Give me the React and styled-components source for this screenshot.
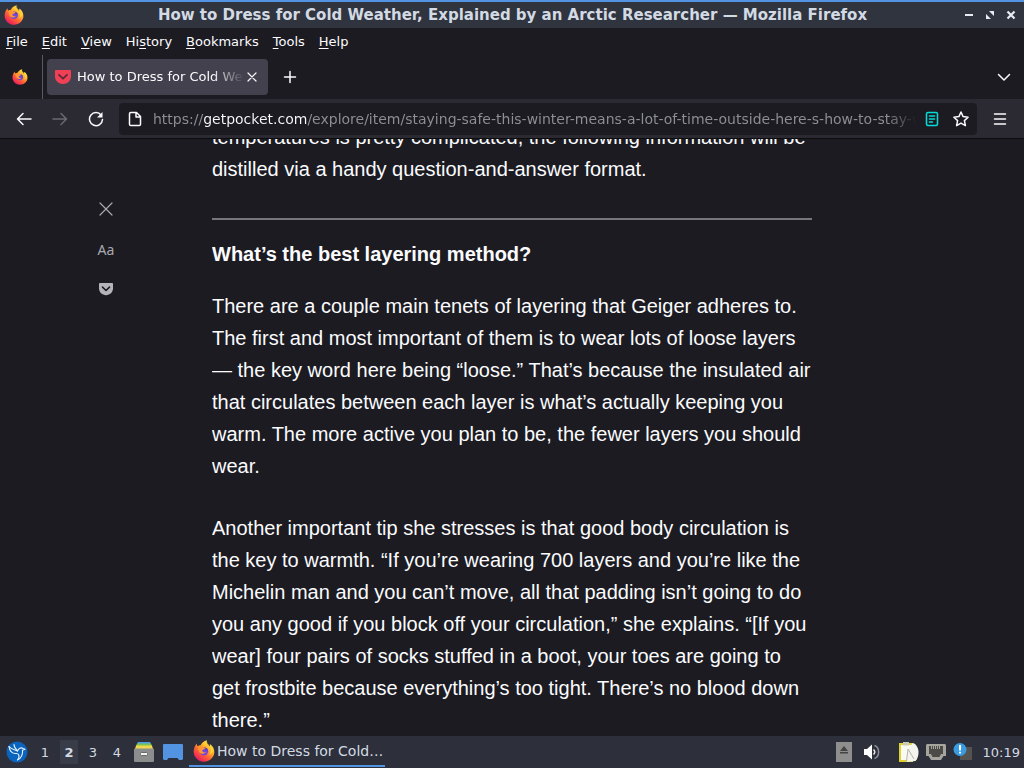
import styled, { createGlobalStyle } from "styled-components";

const GlobalStyle = createGlobalStyle`
*, *::before, *::after { box-sizing: border-box; }
body {
   margin: 0;
   background: #1c1b22;
   font-family: "DejaVu Sans", sans-serif;
}
button {
   padding: 0;
   border: 0;
   background: none;
   color: inherit;
   font: inherit;
   cursor: pointer;
}
p, h1, h2, ul { margin: 0; padding: 0; }
svg { display: block; flex: none; }
`

const Desktop = styled.div`
display: flex;
flex-direction: column;
height: 100vh;
overflow: hidden;
color: #fbfbfe;
`

/* window title */
const TitleBar = styled.header`
display: grid;
grid-template-columns: 1fr auto 1fr;
align-items: center;
flex: none;
height: 28px;
padding: 0 3px 0 4px;
border-top: 2px solid #5294e2;
background: #2f343f;
`

const WindowTitle = styled.h1`
font-size: 15px;
font-weight: bold;
line-height: 26px;
color: #d3dae3;
white-space: nowrap;
`

const WindowButtons = styled.div`
display: flex;
justify-content: flex-end;
color: #e8ecf2;
`

const WindowButton = styled.button`
display: flex;
align-items: center;
justify-content: center;
width: 21px;
height: 26px;
`

/* menu */
const MenuBar = styled.nav`
display: flex;
flex: none;
gap: 14px;
height: 27px;
padding: 0 6px;
background: #1c1b22;
`

const MenuItem = styled.button`
font-size: 13px;
line-height: 26px;
`

const Key = styled.span`
text-decoration: underline;
text-underline-offset: 2px;
`

/* tabs */
const TabBar = styled.div`
display: flex;
align-items: center;
flex: none;
height: 44px;
background: #1c1b22;
`

const PinnedTab = styled.button`
display: flex;
align-items: center;
justify-content: center;
width: 43px;
height: 44px;
padding-right: 2px;
border-right: 1px solid #5b5a62;
`

const Tab = styled.div`
display: flex;
align-items: center;
width: 221px;
height: 36px;
margin-left: 4px;
padding: 0 8px;
border-radius: 4px;
background: #42414d;
`

const TabTitle = styled.button`
flex: 1;
min-width: 0;
margin-left: 6px;
overflow: hidden;
font-size: 13px;
line-height: 36px;
text-align: left;
white-space: nowrap;
mask-image: linear-gradient(to left, transparent, #000 32px);
`

const TabClose = styled.button`
display: flex;
align-items: center;
justify-content: center;
width: 16px;
height: 20px;
`

const IconButton = styled.button`
display: flex;
align-items: center;
justify-content: center;
flex: none;
width: ${({ $w }) => $w || 36}px;
height: 32px;
margin-left: ${({ $push }) => $push ? "auto" : 0};
color: ${({ $dim }) => $dim ? "#6b6a74" : "#fbfbfe"};
`

/* navigation */
const NavBar = styled.div`
display: flex;
align-items: center;
flex: none;
height: 40px;
padding: 0 6px;
border-bottom: 1px solid #0c0c0d;
background: #2b2a33;
`

const UrlBar = styled.div`
display: flex;
align-items: center;
flex: 1;
min-width: 0;
height: 32px;
margin: 0 5px;
padding: 0 3px 0 0;
border-radius: 4px;
background: #1c1b22;
`

/* the domain is lit, the rest of the address is dimmed and fades out */
const UrlInput = styled.input`
flex: 1;
min-width: 0;
height: 32px;
margin-left: 2px;
padding: 0;
border: 0;
outline: none;
font: 14px "DejaVu Sans", sans-serif;
color: transparent;
background-image: linear-gradient(to right, #8f8f98 50px, #fbfbfe 50px, #fbfbfe 154px, #8f8f98 154px);
background-clip: text;
mask-image: linear-gradient(to left, transparent, #000 28px);
`

/* page */
const Page = styled.main`
display: grid;
grid-template-columns: 1fr minmax(0, 600px) 1fr;
flex: 1;
min-height: 0;
background: #1c1b22;
`

const ReaderTools = styled.aside`
display: flex;
flex-direction: column;
align-items: center;
padding-top: 50px;
`

const ReaderButton = styled.button`
display: flex;
align-items: center;
justify-content: center;
width: 40px;
height: 40px;
color: #a9a8ae;
font: 14px "Noto Sans", sans-serif;
`

const Article = styled.article`
display: flex;
flex-direction: column;
justify-content: flex-end;
min-height: 0;
overflow: hidden;
font: 20px/32px "Liberation Sans", Arial, sans-serif;
color: #fbfbfe;
`

const Paragraph = styled.p`
&+& {
   margin-top: 30px;
}
`

const Divider = styled.hr`
width: 100%;
margin: 33px 0 18px;
border: 0;
border-top: 2px solid #77767b;
`

const Heading = styled.h2`
margin-bottom: 20px;
font-size: 20px;
line-height: 32px;
`

/* panel */
const Panel = styled.footer`
display: flex;
align-items: center;
flex: none;
height: 32px;
padding: 0 4px 0 0;
background: #2d303b;
color: #d3dae3;
`

const PanelButton = styled.button`
display: flex;
align-items: center;
justify-content: center;
width: ${({ $w }) => $w}px;
height: 32px;
`

const Workspace = styled.button`
width: 24px;
height: 32px;
font-size: 13px;
font-weight: ${({ $on }) => $on ? "bold" : "normal"};
background: ${({ $on }) => $on ? "linear-gradient(#383c48, #383c48) center / 18px 24px no-repeat" : "none"};
`

const Task = styled.button`
display: flex;
align-items: center;
gap: 2px;
width: 196px;
height: 30px;
margin-left: 2px;
padding: 0 0 0 4px;
border-bottom: 2px solid #5294e2;
font-size: 14px;
white-space: nowrap;
`

const Tray = styled.div`
display: flex;
align-items: center;
margin-left: auto;
`

const TrayGroup = styled.div`
display: flex;
margin-left: 10px;
`

const Clock = styled.time`
margin-left: 7px;
font-size: 13px;
`

const FirefoxLogo = ({ size }) => (
    <svg width={size} height={size} viewBox="0 0 32 32" aria-hidden="true">
        <defs>
            <linearGradient id={`fx${size}`} x1=".85" y1=".05" x2=".2" y2=".95">
                <stop offset="0" stopColor="#fff04a" />
                <stop offset=".3" stopColor="#ffbd2e" />
                <stop offset=".6" stopColor="#ff6a33" />
                <stop offset=".85" stopColor="#f5334f" />
                <stop offset="1" stopColor="#dc1c6d" />
            </linearGradient>
        </defs>
        <path fill={`url(#fx${size})`} d="M20.500 0.500c-1 2-.5 4 1 5.500 1 1 2 2 2.500 3.500.7-1 .7-2.500.4-3.800C29 8.500 31 13 31 17.500 31 25 24.500 31.500 16 31.500S1 25 1 17c0-4 1.300-8.500 4.500-12 0 1.700.4 3 1.200 4 1.200-1 2.700-1.500 4.300-1.500C12.500 5 15.500 1.500 20.500.5z" />
        <circle cx="16" cy="16.500" r="6" fill="#7547d8" />
        <path fill="#4f3fc5" d="M16 11c4-.5 6 2.500 6 6-1-2-2.500-3-4.500-2.500z" />
        <path fill="#ff9632" d="M6.500 9.500c3-2 6-1.500 8 .5 1 .8 2.500 1 4 1-.2 2-2 2.500-4 3-1 .4-1.300 1.200-1 2 .8 2 3.500 2.500 5.500 1.500-1.500 3-7 3.500-9.500.5-1.500-2.500-2-6-3-8.500z" />
        <path fill="#ffd23c" d="M21 2c-1 4 5 7 5 13 0 3-1 5-3 7 3-1 6-4 6-8 0-3-2-6-4-7.500 0 1.500 0 2-.8 3C23.500 7 21 5.500 21 2z" />
    </svg>
)

const PocketIcon = ({ size, fill, mark }) => (
    <svg width={size} height={size} viewBox="0 0 16 16" aria-hidden="true">
        <path fill={fill} d="M.8 1h14.400c.5 0 .8.400.8.900V7.500c0 4.300-3.600 7.500-8 7.500S0 11.800 0 7.500V1.900c0-.5.300-.9.800-.9z" />
        <path fill="none" stroke={mark} strokeWidth="1.800" strokeLinecap="round" strokeLinejoin="round" d="M4 5.800 8 9.700l4-3.900" />
    </svg>
)

const Line = ({ size = 16, box = 16, width = 1.5, d, stroke = "currentColor", cap = "round" }) => (
    <svg width={size} height={size} viewBox={`0 0 ${box} ${box}`} fill="none" stroke={stroke} strokeWidth={width} strokeLinecap={cap} strokeLinejoin="round" aria-hidden="true">
        <path d={d} />
    </svg>
)

const MENU = [
    ["", "F", "ile"],
    ["", "E", "dit"],
    ["", "V", "iew"],
    ["Hi", "s", "tory"],
    ["", "B", "ookmarks"],
    ["", "T", "ools"],
    ["", "H", "elp"],
]

const PAGE_TITLE = "How to Dress for Cold Weather, Explained by an Arctic Researcher"
const PAGE_URL = "https://getpocket.com/explore/item/staying-safe-this-winter-means-a-lot-of-time-outside-here-s-how-to-stay-warm"

const WindowTop = () => (
    <TitleBar>
        <FirefoxLogo size={20} />
        <WindowTitle>{PAGE_TITLE} — Mozilla Firefox</WindowTitle>
        <WindowButtons>
            <WindowButton aria-label="Minimize">
                <Line size={10} box={10} width={2} cap="butt" d="M1 5h8" />
            </WindowButton>
            <WindowButton aria-label="Restore">
                <svg width="10" height="10" viewBox="0 0 10 10" fill="currentColor" aria-hidden="true">
                    <path d="M4 1h5v5zM1 4v5h5z" />
                </svg>
            </WindowButton>
            <WindowButton aria-label="Close">
                <Line size={10} box={10} width={2.2} cap="butt" d="M1.500 1.500l7 7M8.500 1.500l-7 7" />
            </WindowButton>
        </WindowButtons>
    </TitleBar>
)

const Menu = () => (
    <MenuBar>
        {
            MENU.map(([before, key, after]) => (
                <MenuItem key={key + after}>{before}<Key>{key}</Key>{after}</MenuItem>
            ))
        }
    </MenuBar>
)

const Tabs = () => (
    <TabBar>
        <PinnedTab aria-label="Pinned tab"><FirefoxLogo size={16} /></PinnedTab>
        <Tab>
            <PocketIcon size={16} fill="#ef4056" mark="#5c2a3a" />
            <TabTitle>{PAGE_TITLE}</TabTitle>
            <TabClose aria-label="Close tab">
                <Line size={10} box={10} width={1.2} d="M1 1l8 8M9 1l-8 8" />
            </TabClose>
        </Tab>
        <IconButton $w={43} aria-label="New tab">
            <Line size={14} box={14} d="M7 1.500v11M1.500 7h11" />
        </IconButton>
        <IconButton $w={40} $push aria-label="List all tabs">
            <Line size={14} box={14} d="M1.500 4.500 7 10l5.500-5.500" />
        </IconButton>
    </TabBar>
)

const Navigation = () => (
    <NavBar>
        <IconButton aria-label="Back"><Line d="M15 8H1.500M7 2.500 1.500 8 7 13.500" /></IconButton>
        <IconButton $dim aria-label="Forward"><Line d="M1 8h13.500M9 2.500 14.500 8 9 13.500" /></IconButton>
        <IconButton aria-label="Reload">
            <svg width="16" height="16" viewBox="0 0 16 16" fill="none" stroke="currentColor" strokeWidth="1.500" strokeLinecap="round" aria-hidden="true">
                <path d="M13.200 4.200A6.500 6.500 0 1 0 14.500 8.500" />
                <path d="M14.500 1v5.500H9z" fill="currentColor" stroke="none" />
            </svg>
        </IconButton>
        <UrlBar>
            <IconButton $w={32} aria-label="Page info">
                <Line d="M3.800 1.500h5.700l4 4v7.700c0 .8-.5 1.300-1.300 1.300H3.800c-.8 0-1.300-.5-1.300-1.300V2.800c0-.8.500-1.300 1.300-1.300zM9 1.500V6h4.500" />
            </IconButton>
            <UrlInput aria-label="Address" defaultValue={PAGE_URL} spellCheck={false} />
            <IconButton $w={32} aria-label="Toggle reader view">
                <Line stroke="#00ddda" d="M4 1.500h8c1 0 1.500.5 1.500 1.500v10c0 1-.5 1.500-1.500 1.500H4c-1 0-1.500-.5-1.500-1.500V3c0-1 .5-1.500 1.500-1.500zM5.500 5h5M5.500 8h5M5.500 11h3" />
            </IconButton>
            <IconButton $w={26} aria-label="Bookmark this page">
                <Line d="M8 1l2.100 4.600 5 .6-3.700 3.400 1 5L8 12.100l-4.400 2.500 1-5L.9 6.200l5-.6z" />
            </IconButton>
        </UrlBar>
        <IconButton aria-label="Application menu"><Line d="M2.500 3h11M2.500 8h11M2.500 13h11" /></IconButton>
    </NavBar>
)

const Reader = () => (
    <Page>
        <ReaderTools>
            <ReaderButton aria-label="Close reader view">
                <Line size={14} box={14} width={1.2} d="M1 1l12 12M13 1 1 13" />
            </ReaderButton>
            <ReaderButton aria-label="Type controls">Aa</ReaderButton>
            <ReaderButton aria-label="Save to Pocket">
                <PocketIcon size={14} fill="#b4b3b9" mark="#1c1b22" />
            </ReaderButton>
        </ReaderTools>
        <Article>
            <Paragraph>
                temperatures is pretty complicated, the following information will be distilled via a handy question-and-answer format.
            </Paragraph>
            <Divider />
            <Heading>What’s the best layering method?</Heading>
            <Paragraph>
                There are a couple main tenets of layering that Geiger adheres to. The first and most important of them is to wear lots of loose layers — the key word here being “loose.” That’s because the insulated air that circulates between each layer is what’s actually keeping you warm. The more active you plan to be, the fewer layers you should wear.
            </Paragraph>
            <Paragraph>
                Another important tip she stresses is that good body circulation is the key to warmth. “If you’re wearing 700 layers and you’re like the Michelin man and you can’t move, all that padding isn’t going to do you any good if you block off your circulation,” she explains. “[If you wear] four pairs of socks stuffed in a boot, your toes are going to get frostbite because everything’s too tight. There’s no blood down there.”
            </Paragraph>
        </Article>
    </Page>
)

const Taskbar = () => (
    <Panel>
        <PanelButton $w={33} aria-label="Applications">
            <svg width="22" height="22" viewBox="0 0 22 22" aria-hidden="true">
                <circle cx="11" cy="11" r="10.500" fill="#0a63bd" />
                <g fill="none" stroke="#e6f2ff" strokeWidth="1.100" strokeLinecap="round" strokeLinejoin="round">
                    <path d="M3 5.500c2 2.500 5 3 8.500 4.500 1-2.500 3.500-4 5.500-2.500l2 .8-2.500 1c.5 4-1 7.500-5 9.500" />
                    <path d="M3 5.500c.5 4 3 7.500 8 7" />
                    <path d="M8 3.500c0 2.500 1.500 4.500 3.500 6.500M12 13c1.500 1.500 1 4-.5 6" />
                </g>
            </svg>
        </PanelButton>
        {
            [1, 2, 3, 4].map(n => <Workspace key={n} $on={n === 2}>{n}</Workspace>)
        }
        <PanelButton $w={30} aria-label="File manager">
            <svg width="20" height="20" viewBox="0 0 20 20" aria-hidden="true">
                <path fill="#4f9fe0" d="M4 0h12l1 2H3z" />
                <path fill="#7fc050" d="M3 1.500h14l1 2.500H2z" />
                <path fill="#f0d750" d="M2 3.500h16l1 3.500H1z" />
                <rect y="6.500" width="20" height="13.500" rx="1" fill="#8b8e8c" />
                <rect x="6.500" y="10.500" width="7" height="3" rx="1" fill="#f5f5f5" stroke="#666967" />
            </svg>
        </PanelButton>
        <PanelButton $w={28} aria-label="Show desktop">
            <svg width="20" height="18" viewBox="0 0 20 18" aria-hidden="true">
                <path fill="#5294e2" d="M1 1h18q1 0 1 1v14l-1 1h-3l-1.500-2h-9L4 17H1l-1-1V2q0-1 1-1z" />
            </svg>
        </PanelButton>
        <Task>
            <FirefoxLogo size={22} />
            How to Dress for Cold…
        </Task>
        <Tray>
            <PanelButton $w={28} aria-label="Removable media">
                <svg width="16" height="20" viewBox="0 0 16 20" aria-hidden="true">
                    <rect width="16" height="20" fill="#8e8e8e" />
                    <path fill="#444" d="M8 4l4 5H4zM4 10h8v1.500H4z" />
                </svg>
            </PanelButton>
            <PanelButton $w={28} aria-label="Volume">
                <svg width="16" height="16" viewBox="0 0 16 16" aria-hidden="true">
                    <path fill="#fff" d="M0 5h3l5-4.500v15L3 11H0z" />
                    <path fill="none" stroke="#e8e8e8" strokeWidth="1.500" d="M9.500 5.500q2.500 2.500 0 5" />
                    <path fill="none" stroke="#8b8e96" strokeWidth="1.500" d="M10.500 1.500c5.500 2 5.500 11 0 13" />
                </svg>
            </PanelButton>
            <TrayGroup>
                <PanelButton $w={27} aria-label="Clipboard">
                    <svg width="20" height="20" viewBox="0 0 20 20" aria-hidden="true">
                        <path fill="#dfd12e" d="M0 1h14v19H0z" />
                        <path fill="#fafaf2" d="M2 3h11v15H2z" />
                        <path fill="#c9c9bf" d="M4 0h6v3.500H4z" />
                        <path fill="#f4f4ee" d="M9 7l5-6c3 1 5 4 5.500 8 .3 4-1 8-3 10l-9 1z" />
                        <path fill="none" stroke="#a5a59c" strokeWidth=".8" d="M7.500 19 9 7l6 10" />
                    </svg>
                </PanelButton>
                <PanelButton $w={27} aria-label="Network">
                    <svg width="20" height="18" viewBox="0 0 20 18" aria-hidden="true">
                        <path fill="#a5a49d" d="M1 1h18l1 1v11h-2.500l-2.500 4H5l-2.500-4H0V2z" />
                        <path fill="#4c4b48" d="M3 3h14v8h-2l-1.500 3h-7L5 11H3z" />
                        <path stroke="#a5a49d" d="M5.500 3v3M7.500 3v3M9.500 3v3M11.500 3v3M13.500 3v3" />
                    </svg>
                </PanelButton>
                <PanelButton $w={26} aria-label="Updates">
                    <svg width="20" height="20" viewBox="0 0 20 20" aria-hidden="true">
                        <path fill="#55534f" d="M7 5h12v13H7z" />
                        <circle cx="7" cy="7.500" r="6.500" fill="#3b9be0" />
                        <path stroke="#fff" strokeWidth="2" d="M7 3v5.500M7 9.800v1.800" />
                    </svg>
                </PanelButton>
            </TrayGroup>
            <Clock>10:19</Clock>
        </Tray>
    </Panel>
)

const App = () => {
    return (
        <Desktop>
            <GlobalStyle />
            <WindowTop />
            <Menu />
            <Tabs />
            <Navigation />
            <Reader />
            <Taskbar />
        </Desktop>
    )
}

export default App;
